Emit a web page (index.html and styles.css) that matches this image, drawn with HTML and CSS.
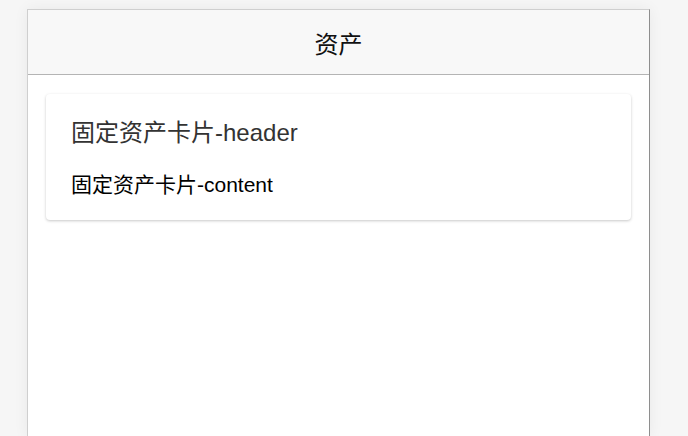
FILE: index.html
```html
<!DOCTYPE html>
<html lang="zh">
<head>
<meta charset="utf-8">
<title>资产</title>
<link rel="stylesheet" href="styles.css">
</head>
<body>
<div class="frame">
  <header class="navbar">资产</header>
  <main class="content">
    <section class="card">
      <div class="card-header">固定资产卡片-header</div>
      <div class="card-body">固定资产卡片-content</div>
    </section>
  </main>
</div>
</body>
</html>
```

FILE: styles.css
```css
html, body {
  margin: 0;
  padding: 0;
  height: 100%;
  overflow: hidden;
}
body {
  background: #f6f6f6;
  font-family: "Liberation Sans", "Noto Sans CJK SC", sans-serif;
}
.frame {
  margin: 9px 0 0 27px;
  width: 621px;
  height: 427px;
  background: #fff;
  border-top: 1px solid #cfcfcf;
  border-left: 1px solid #cfcfcf;
  border-right: 1px solid #8e8e8e;
  box-shadow: 0 0 14px rgba(0,0,0,0.06);
}
.navbar {
  height: 64px;
  background: #f8f8f8;
  border-bottom: 1px solid #b4b4b4;
  display: flex;
  align-items: center;
  justify-content: center;
  font-size: 24px;
  color: #111;
}
.content {
  padding: 19px 18px;
}
.card {
  background: #fff;
  border-radius: 4px;
  box-shadow: 0 1px 3px rgba(0,0,0,0.22);
  height: 126px;
  box-sizing: border-box;
  padding: 22px 25px 0;
}
.card-header {
  font-size: 24px;
  color: #333;
  line-height: 34px;
}
.card-body {
  margin-top: 22px;
  font-size: 21px;
  color: #000;
  line-height: 26px;
}
```
